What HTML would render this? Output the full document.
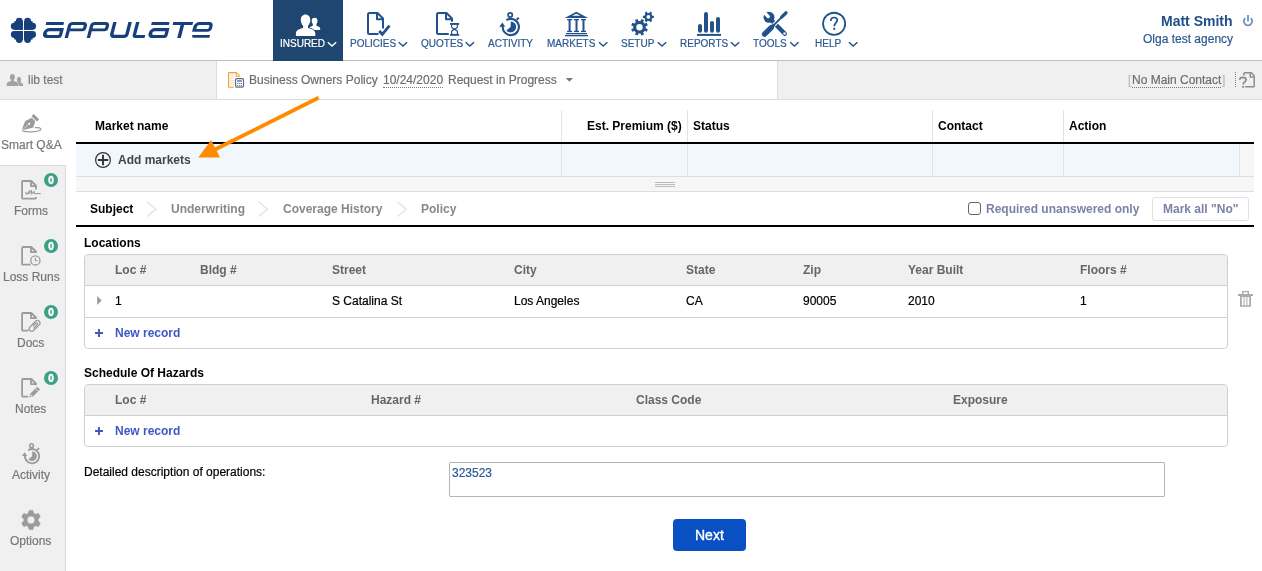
<!DOCTYPE html>
<html><head><meta charset="utf-8">
<style>
*{box-sizing:border-box;margin:0;padding:0}
body{-webkit-font-smoothing:antialiased}
html,body{width:1262px;height:571px;overflow:hidden;background:#fff;font-family:"Liberation Sans",sans-serif;position:relative}
.a{position:absolute}
.t{position:absolute;white-space:nowrap;font-size:12px;line-height:12px;-webkit-text-stroke:0.2px currentColor}
.b{font-weight:bold;-webkit-text-stroke:0}
.n{font-size:10px;line-height:10px;color:#2c5890;top:39px}
.nw{color:#fff}
.sb{font-size:12px;line-height:12px;color:#777}
.hd{font-weight:bold;color:#666;-webkit-text-stroke:0}
.badge{position:absolute;left:44px;width:14px;height:14px;border-radius:7px;background:#3d9f85;color:#fff;font:bold 10px/15px "Liberation Sans",sans-serif;text-align:center;-webkit-text-stroke:0.45px #fff}
</style></head><body>
<!-- HEADER -->
<div class="a" style="left:0;top:60px;width:1262px;height:1px;background:#b7c2cd"></div>
<div class="a" style="left:273px;top:0;width:70px;height:61px;background:#1f4571"></div>
<!-- SECOND BAR -->
<div class="a" style="left:0;top:61px;width:1262px;height:38px;background:#f0f0f0"></div>
<div class="a" style="left:0;top:99px;width:1262px;height:1px;background:#dcdcdc"></div>
<div class="a" style="left:216px;top:61px;width:562px;height:38px;background:#fff;border-left:1px solid #dcdcdc;border-right:1px solid #dcdcdc"></div>
<!-- SIDEBAR -->
<div class="a" style="left:0;top:165px;width:66px;height:406px;background:#f0f0f0;border-right:1px solid #dcdcdc;border-top:1px solid #dcdcdc"></div>
<!-- CONTENT BODY -->
<div id="content">
<!-- market table -->
<div class="a" style="left:561px;top:110px;width:1px;height:32px;background:#e3e3e3"></div>
<div class="a" style="left:687px;top:110px;width:1px;height:32px;background:#e3e3e3"></div>
<div class="a" style="left:932px;top:110px;width:1px;height:32px;background:#e3e3e3"></div>
<div class="a" style="left:1063px;top:110px;width:1px;height:32px;background:#e3e3e3"></div>
<div class="a" style="left:76px;top:142px;width:1178px;height:2px;background:#000"></div>
<div class="a" style="left:76px;top:144px;width:1164px;height:32px;background:#f2f7fd"></div>
<div class="a" style="left:1240px;top:144px;width:14px;height:32px;background:#f6f6f6"></div>
<div class="a" style="left:561px;top:144px;width:1px;height:32px;background:#e3e3e3"></div>
<div class="a" style="left:687px;top:144px;width:1px;height:32px;background:#e3e3e3"></div>
<div class="a" style="left:932px;top:144px;width:1px;height:32px;background:#e3e3e3"></div>
<div class="a" style="left:1063px;top:144px;width:1px;height:32px;background:#e3e3e3"></div>
<div class="a" style="left:1239px;top:144px;width:1px;height:32px;background:#e3e3e3"></div>
<!-- splitter -->
<div class="a" style="left:76px;top:176px;width:1178px;height:16px;background:#f6f6f6;border-top:1px solid #dedede;border-bottom:1px solid #dedede"></div>
<div class="a" style="left:655px;top:182px;width:20px;height:1px;background:#bbb"></div>
<div class="a" style="left:655px;top:184px;width:20px;height:1px;background:#bbb"></div>
<div class="a" style="left:655px;top:186px;width:20px;height:1px;background:#bbb"></div>
<!-- tabs line -->
<div class="a" style="left:76px;top:225px;width:1178px;height:2px;background:#000"></div>
<!-- checkbox & button -->
<div class="a" style="left:968px;top:202px;width:13px;height:13px;border:1px solid #666;border-radius:3px;background:#fff"></div>
<div class="a" style="left:1152px;top:197px;width:97px;height:24px;border:1px solid #dfe1e6;border-radius:3px;background:#fff"></div>
<!-- locations table -->
<div class="a" style="left:84px;top:254px;width:1144px;height:95px;border:1px solid #cfcfcf;border-radius:4px;overflow:hidden;background:#fff">
  <div class="a" style="left:0;top:0;width:1142px;height:31px;background:#f0f0f0;border-bottom:1px solid #cfcfcf"></div>
  <div class="a" style="left:0;top:62px;width:1142px;height:1px;background:#cfcfcf"></div>
</div>
<!-- hazards table -->
<div class="a" style="left:84px;top:384px;width:1144px;height:63px;border:1px solid #cfcfcf;border-radius:4px;overflow:hidden;background:#fff">
  <div class="a" style="left:0;top:0;width:1142px;height:31px;background:#f0f0f0;border-bottom:1px solid #cfcfcf"></div>
</div>
<!-- textarea -->
<div class="a" style="left:449px;top:462px;width:716px;height:35px;border:1px solid #b5b5b5;border-radius:1px;background:#fff"></div>
<!-- next button -->
<div class="a" style="left:673px;top:519px;width:73px;height:32px;border-radius:4px;background:#0950c4"></div>
</div>
<!-- TEXTS -->
<div id="texts" style="position:absolute;left:0;top:0;width:1262px;height:571px;will-change:transform">
<!-- nav -->
<span class="t n nw" style="left:280px">INSURED</span>
<span class="t n" style="left:350px">POLICIES</span>
<span class="t n" style="left:421px">QUOTES</span>
<span class="t n" style="left:488px">ACTIVITY</span>
<span class="t n" style="left:547px">MARKETS</span>
<span class="t n" style="left:621px">SETUP</span>
<span class="t n" style="left:680px">REPORTS</span>
<span class="t n" style="left:753px">TOOLS</span>
<span class="t n" style="left:815px">HELP</span>
<span class="t b" style="left:1161px;top:14px;font-size:14px;line-height:14px;color:#1e4f87">Matt Smith</span>
<span class="t" style="left:1143px;top:33px;color:#2b5a8f">Olga test agency</span>
<!-- second bar -->
<span class="t" style="left:28px;top:74px;color:#777">lib test</span>
<span class="t" style="left:249px;top:74px;color:#6e6e6e">Business Owners Policy</span>
<span class="t" style="left:383px;top:74px;color:#6e6e6e;border-bottom:1px dotted #777;line-height:13px">10/24/2020</span>
<span class="t" style="left:448px;top:74px;color:#6e6e6e">Request in Progress</span>
<span class="t" style="left:1128px;top:74px;color:#bbb">[</span>
<span class="t" style="left:1132px;top:74px;color:#6e6e6e;border-bottom:1px dotted #777;line-height:13px">No Main Contact</span>
<span class="t" style="left:1222px;top:74px;color:#bbb">]</span>
<!-- sidebar -->
<span class="t sb" style="left:1px;top:139px">Smart Q&amp;A</span>
<span class="t sb" style="left:14px;top:205px">Forms</span>
<span class="t sb" style="left:3px;top:271px">Loss Runs</span>
<span class="t sb" style="left:17px;top:337px">Docs</span>
<span class="t sb" style="left:15px;top:403px">Notes</span>
<span class="t sb" style="left:12px;top:469px">Activity</span>
<span class="t sb" style="left:10px;top:535px">Options</span>
<span class="badge" style="top:173px">0</span>
<span class="badge" style="top:239px">0</span>
<span class="badge" style="top:305px">0</span>
<span class="badge" style="top:371px">0</span>
<!-- market table -->
<span class="t b" style="left:95px;top:120px;color:#000">Market name</span>
<span class="t b" style="left:587px;top:120px;color:#000">Est. Premium ($)</span>
<span class="t b" style="left:693px;top:120px;color:#000">Status</span>
<span class="t b" style="left:938px;top:120px;color:#000">Contact</span>
<span class="t b" style="left:1069px;top:120px;color:#000">Action</span>
<span class="t b" style="left:118px;top:154px;color:#444">Add markets</span>
<!-- tabs -->
<span class="t b" style="left:90px;top:203px;color:#000">Subject</span>
<span class="t b" style="left:171px;top:203px;color:#888">Underwriting</span>
<span class="t b" style="left:283px;top:203px;color:#888">Coverage History</span>
<span class="t b" style="left:421px;top:203px;color:#888">Policy</span>
<span class="t b" style="left:986px;top:203px;color:#7b82a6">Required unanswered only</span>
<span class="t b" style="left:1163px;top:203px;color:#7b82a6">Mark all "No"</span>
<!-- locations -->
<span class="t b" style="left:84px;top:237px;color:#000">Locations</span>
<span class="t hd" style="left:115px;top:264px">Loc #</span>
<span class="t hd" style="left:200px;top:264px">Bldg #</span>
<span class="t hd" style="left:332px;top:264px">Street</span>
<span class="t hd" style="left:514px;top:264px">City</span>
<span class="t hd" style="left:686px;top:264px">State</span>
<span class="t hd" style="left:803px;top:264px">Zip</span>
<span class="t hd" style="left:908px;top:264px">Year Built</span>
<span class="t hd" style="left:1080px;top:264px">Floors #</span>
<span class="t" style="left:115px;top:295px;color:#000">1</span>
<span class="t" style="left:332px;top:295px;color:#000">S Catalina St</span>
<span class="t" style="left:514px;top:295px;color:#000">Los Angeles</span>
<span class="t" style="left:686px;top:295px;color:#000">CA</span>
<span class="t" style="left:803px;top:295px;color:#000">90005</span>
<span class="t" style="left:908px;top:295px;color:#000">2010</span>
<span class="t" style="left:1080px;top:295px;color:#000">1</span>
<span class="t b" style="left:115px;top:327px;color:#3e58c4">New record</span>
<!-- hazards -->
<span class="t b" style="left:84px;top:367px;color:#000">Schedule Of Hazards</span>
<span class="t hd" style="left:115px;top:394px">Loc #</span>
<span class="t hd" style="left:371px;top:394px">Hazard #</span>
<span class="t hd" style="left:636px;top:394px">Class Code</span>
<span class="t hd" style="left:953px;top:394px">Exposure</span>
<span class="t b" style="left:115px;top:425px;color:#3e58c4">New record</span>
<!-- description -->
<span class="t" style="left:84px;top:466px;color:#000">Detailed description of operations:</span>
<span class="t" style="left:452px;top:467px;color:#2a5a92">323523</span>
<span class="t" style="left:695px;top:528px;font-size:14px;line-height:14px;color:#fff;-webkit-text-stroke:0.35px #fff">Next</span>
</div>
<!-- ICONS -->
<svg class="a" style="left:0;top:0" width="1262" height="571" viewBox="0 0 1262 571" id="icons">
<g id="logo"><g fill="#173f7b" transform="translate(23.45,30.35)"><g><rect x="-7.60" y="-9.15" width="6.90" height="8.45"/><rect x="-9.15" y="-7.60" width="8.45" height="6.90"/><rect x="-9.15" y="-9.15" width="8.45" height="8.45"/><circle cx="-4.15" cy="-9.15" r="3.45"/><circle cx="-9.15" cy="-4.15" r="3.45"/></g><g transform="scale(-1,1)"><rect x="-7.60" y="-9.15" width="6.90" height="8.45"/><rect x="-9.15" y="-7.60" width="8.45" height="6.90"/><rect x="-9.15" y="-9.15" width="8.45" height="8.45"/><circle cx="-4.15" cy="-9.15" r="3.45"/><circle cx="-9.15" cy="-4.15" r="3.45"/></g><g transform="scale(1,-1)"><rect x="-7.60" y="-9.15" width="6.90" height="8.45"/><rect x="-9.15" y="-7.60" width="8.45" height="6.90"/><rect x="-9.15" y="-9.15" width="8.45" height="8.45"/><circle cx="-4.15" cy="-9.15" r="3.45"/><circle cx="-9.15" cy="-4.15" r="3.45"/></g><g transform="scale(-1,-1)"><rect x="-7.60" y="-9.15" width="6.90" height="8.45"/><rect x="-9.15" y="-7.60" width="8.45" height="6.90"/><rect x="-9.15" y="-9.15" width="8.45" height="8.45"/><circle cx="-4.15" cy="-9.15" r="3.45"/><circle cx="-9.15" cy="-4.15" r="3.45"/></g></g><g transform="matrix(1,0,-0.26,1,9.880,0)"><path d="M42.20,22.00 H58.70 A1.4,1.4 0 0 1 60.10,23.40 V24.30 A0.6,0.6 0 0 1 59.50,24.90 H42.20 V22.00 Z M46.90,28.00 H60.90 A0.5,0.5 0 0 1 61.40,28.50 V35.40 A2.6,2.6 0 0 1 58.80,38.00 H46.40 A4.5,4.5 0 0 1 41.90,33.50 V33.00 A5,5 0 0 1 46.90,28.00 Z M47.30,31.30 A1.8,1.8 0 0 0 45.50,33.10 V33.20 A1.8,1.8 0 0 0 47.30,35.00 H57.30 A0.8,0.8 0 0 0 58.10,34.20 V31.60 A0.3,0.3 0 0 0 57.80,31.30 Z M68.80,22.00 H79.80 A4,4 0 0 1 83.80,26.00 V27.70 A3.5,3.5 0 0 1 80.30,31.20 H64.60 V26.20 A4.2,4.2 0 0 1 68.80,22.00 Z M69.20,24.90 A1.2,1.2 0 0 0 68.00,26.10 V28.60 H79.50 A1,1 0 0 0 80.50,27.60 V25.90 A1,1 0 0 0 79.50,24.90 Z M64.60,29.00 H67.95 V38.00 H64.60 V29.00 Z M90.90,22.00 H101.90 A4,4 0 0 1 105.90,26.00 V27.70 A3.5,3.5 0 0 1 102.40,31.20 H86.70 V26.20 A4.2,4.2 0 0 1 90.90,22.00 Z M91.30,24.90 A1.2,1.2 0 0 0 90.10,26.10 V28.60 H101.60 A1,1 0 0 0 102.60,27.60 V25.90 A1,1 0 0 0 101.60,24.90 Z M86.70,29.00 H90.05 V38.00 H86.70 V29.00 Z M109.10,22 H112.50 V33.8 A1,1 0 0 0 113.50,34.8 H123.25 A1,1 0 0 0 124.25,33.8 V22 H127.70 V34.2 A3.8,3.8 0 0 1 123.90,38 H113.30 A4.2,4.2 0 0 1 109.10,33.8 Z M131.90,22.00 H135.30 V38.00 H135.40 A3.5,3.5 0 0 1 131.90,34.50 V22.00 Z M133.90,34.90 H144.50 V38.00 H133.90 V34.90 Z M147.70,22.00 H164.20 A1.4,1.4 0 0 1 165.60,23.40 V24.30 A0.6,0.6 0 0 1 165.00,24.90 H147.70 V22.00 Z M152.40,28.00 H166.40 A0.5,0.5 0 0 1 166.90,28.50 V35.40 A2.6,2.6 0 0 1 164.30,38.00 H151.90 A4.5,4.5 0 0 1 147.40,33.50 V33.00 A5,5 0 0 1 152.40,28.00 Z M152.80,31.30 A1.8,1.8 0 0 0 151.00,33.10 V33.20 A1.8,1.8 0 0 0 152.80,35.00 H162.80 A0.8,0.8 0 0 0 163.60,34.20 V31.60 A0.3,0.3 0 0 0 163.30,31.30 Z M169.20,22.00 H189.00 V24.90 H169.20 V22.00 Z M177.20,24.00 H180.80 V38.00 H177.20 V24.00 Z M195.40,22.00 H205.50 A4,4 0 0 1 209.50,26.00 V27.90 A3.8,3.8 0 0 1 205.70,31.70 H190.80 A0.4,0.4 0 0 1 190.40,31.30 V27.00 A5,5 0 0 1 195.40,22.00 Z M195.80,24.90 A1.8,1.8 0 0 0 194.00,26.70 V28.60 A0.3,0.3 0 0 0 194.30,28.90 H205.00 A1.3,1.3 0 0 0 206.30,27.60 V26.20 A1.3,1.3 0 0 0 205.00,24.90 Z M191.60,35.00 H209.30 V37.80 H193.80 A2.2,2.2 0 0 1 191.60,35.60 V35.00 Z " fill="#173f7b" fill-rule="nonzero"/></g></g><!--/logo-->
<g id="nav">
<g fill="#fff">
<ellipse cx="314.6" cy="21.1" rx="2.9" ry="3.3"/>
<path d="M312.8,23.5 h3.6 v2.2 c1.8,0.4 3.8,1.3 3.8,3 v1.3 h-10.8 v-1.3 c0,-1.7 1.8,-2.6 3.4,-3 z"/>
</g>
<g fill="#fff" stroke="#1f4571" stroke-width="1.3" paint-order="stroke">
<path d="M305.5,14.6 c2.9,0 4.8,2.3 4.8,5.4 c0,2.4 -1,4.6 -2.3,5.8 v2.2 c3.6,0.9 7.3,2.3 7.3,5.2 v2.9 h-19.4 v-2.9 c0,-2.9 3.7,-4.3 7.2,-5.2 v-2.2 c-1.3,-1.2 -2.3,-3.4 -2.3,-5.8 c0,-3.1 1.9,-5.4 4.7,-5.4 z"/>
</g>
<g fill="none" stroke="#21528c" stroke-width="2" stroke-linejoin="round">
<path d="M378.5,34 H369.5 Q368,34 368,32.5 V14.5 Q368,13 369.5,13 H377.5 L383,18.5 V28.5"/>
<path d="M377,13 V19.3 H383"/>
</g>
<path d="M379.2,31 L382.3,34.3 L389.5,25.6" fill="none" stroke="#21528c" stroke-width="2.8"/>
<g fill="none" stroke="#21528c" stroke-width="2" stroke-linejoin="round">
<path d="M448.8,34 H438.5 Q437,34 437,32.5 V14.5 Q437,13 438.5,13 H446.5 L452,18.5 V21.7"/>
<path d="M446,13 V19.3 H452"/>
</g>
<g fill="#21528c">
<rect x="450" y="23" width="9.2" height="1.9"/>
<rect x="450" y="33.9" width="9.2" height="1.9"/>
</g>
<path d="M451.6,24.8 V27 C451.6,28.6 457.4,29.8 457.4,31.6 V34 M457.4,24.8 V27 C457.4,28.6 451.6,29.8 451.6,31.6 V34" fill="none" stroke="#21528c" stroke-width="1.2"/>
<g fill="none" stroke="#21528c" stroke-width="2.1">
<path d="M506.39,20.21 A8.1,8.1 0 1 1 502.78,25.87"/>
<circle cx="510.2" cy="15" r="2.1" stroke-width="1.8"/>
<path d="M516.6,19.8 L518.8,17.8" stroke-width="2"/>
</g>
<path d="M499.2,26.8 L502.4,22.4 L505.2,26.8 Z" fill="#21528c"/>

<path d="M510.6,26.9 L510.79,21.40 A5.5,5.5 0 1 1 506.39,30.44 Z" fill="#21528c"/>
<g fill="#21528c">
<path d="M576.3,11.8 L588.2,17.9 H564.6 Z M576.3,13.7 L572,15.7 H580.6 Z" fill-rule="evenodd"/>
<rect x="567.1" y="19" width="5" height="1.3"/><rect x="574" y="19" width="5" height="1.3"/><rect x="581" y="19" width="5" height="1.3"/>
<rect x="568.6" y="19.5" width="2" height="12"/><rect x="575.5" y="19.5" width="2" height="12"/><rect x="582.5" y="19.5" width="2" height="12"/>
<rect x="567.1" y="30.8" width="5" height="1.3"/><rect x="574" y="30.8" width="5" height="1.3"/><rect x="581" y="30.8" width="5" height="1.3"/>
<rect x="566" y="33" width="21" height="1.3"/>
<rect x="565" y="35" width="23" height="1.3"/>
</g>
<path d="M645.80,27.3 A6.3,6.3 0 1 1 633.20,27.3 A6.3,6.3 0 1 1 645.80,27.3 Z M642.70,27.3 A3.2,3.2 0 1 0 636.30,27.3 A3.2,3.2 0 1 0 642.70,27.3 Z" fill="#21528c" fill-rule="evenodd"/><path d="M643.86,30.62 L646.72,31.81 L647.80,29.22 L644.93,28.03Z M640.23,32.73 L641.42,35.60 L644.01,34.52 L642.82,31.66Z M636.18,31.66 L634.99,34.52 L637.58,35.60 L638.77,32.73Z M634.07,28.03 L631.20,29.22 L632.28,31.81 L635.14,30.62Z M635.14,23.98 L632.28,22.79 L631.20,25.38 L634.07,26.57Z M638.77,21.87 L637.58,19.00 L634.99,20.08 L636.18,22.94Z M642.82,22.94 L644.01,20.08 L641.42,19.00 L640.23,21.87Z M644.93,26.57 L647.80,25.38 L646.72,22.79 L643.86,23.98Z" fill="#21528c"/>
<path d="M652.40,16.9 A4.0,4.0 0 1 1 644.40,16.9 A4.0,4.0 0 1 1 652.40,16.9 Z M650.30,16.9 A1.9,1.9 0 1 0 646.50,16.9 A1.9,1.9 0 1 0 650.30,16.9 Z" fill="#21528c" fill-rule="evenodd"/><path d="M651.40,18.00 L653.90,18.00 L653.90,15.80 L651.40,15.80Z M648.95,20.05 L650.20,22.21 L652.10,21.11 L650.85,18.95Z M645.95,18.95 L644.70,21.11 L646.60,22.21 L647.85,20.05Z M645.40,15.80 L642.90,15.80 L642.90,18.00 L645.40,18.00Z M647.85,13.75 L646.60,11.59 L644.70,12.69 L645.95,14.85Z M650.85,14.85 L652.10,12.69 L650.20,11.59 L648.95,13.75Z" fill="#21528c"/>
<g stroke="#21528c" stroke-width="4" stroke-linecap="round">
<path d="M700,26 V30.7 M706,13.9 V30.7 M712,23 V30.7 M718,19 V30.7"/>
</g>
<rect x="697" y="33.9" width="24" height="2" fill="#21528c"/>
<g>
<path d="M771,19.8 L784.8,33.8" stroke="#21528c" stroke-width="4.4" stroke-linecap="round"/>
<circle cx="769" cy="17.3" r="5.5" fill="#21528c"/>
<path d="M768.2,16.5 L761.5,9.8" stroke="#fff" stroke-width="3.3" stroke-linecap="round"/>
<circle cx="784.5" cy="33.5" r="1.25" fill="#fff"/>
<path d="M770.5,28.3 L774,24.8 L782,16.8" stroke="#fff" stroke-width="4" fill="none"/>
<path d="M764.6,34.2 L771.2,27.6" stroke="#21528c" stroke-width="5.4" stroke-linecap="round"/>
<path d="M770.5,28.3 L774.2,24.6" stroke="#21528c" stroke-width="3"/>
<path d="M773.5,25.3 L782,16.8" stroke="#21528c" stroke-width="1.9"/>
<path d="M781.6,17.2 L786,12.8" stroke="#21528c" stroke-width="3.3" stroke-linecap="round"/>
</g>
<circle cx="834.1" cy="23.8" r="11.05" fill="none" stroke="#21528c" stroke-width="1.8"/>
<path d="M830.8,21 C830.8,18.6 832.3,17.5 834.1,17.5 C836,17.5 837.3,18.7 837.3,20.3 C837.3,22.6 834.2,23.3 834.2,26.2" fill="none" stroke="#1f1f1f" stroke-width="1.7" style="stroke:#21528c"/>
<rect x="833.2" y="27.8" width="2" height="2" fill="#21528c"/>
<path d="M327.8,42.3 L332.0,46.1 L336.2,42.3" fill="none" stroke="#fff" stroke-width="1.45"/>
<path d="M398.7,42.3 L402.9,46.1 L407.1,42.3" fill="none" stroke="#21528c" stroke-width="1.45"/>
<path d="M465.6,42.3 L469.8,46.1 L474.0,42.3" fill="none" stroke="#21528c" stroke-width="1.45"/>
<path d="M599.0,42.3 L603.2,46.1 L607.4,42.3" fill="none" stroke="#21528c" stroke-width="1.45"/>
<path d="M657.8,42.3 L662.0,46.1 L666.2,42.3" fill="none" stroke="#21528c" stroke-width="1.45"/>
<path d="M730.8,42.3 L735.0,46.1 L739.2,42.3" fill="none" stroke="#21528c" stroke-width="1.45"/>
<path d="M790.2,42.3 L794.4,46.1 L798.6,42.3" fill="none" stroke="#21528c" stroke-width="1.45"/>
<path d="M849.0,42.3 L853.2,46.1 L857.4,42.3" fill="none" stroke="#21528c" stroke-width="1.45"/>
<g stroke="#6f93ba" stroke-width="1.8" fill="none">
<path d="M1248,15 V21.6"/>
<path d="M1245.2,18.2 A4.1,4.1 0 1 0 1250.8,18.2"/>
</g>
</g>
<g id="misc">
<g fill="#a3a3a3">
<ellipse cx="19" cy="79.4" rx="2.1" ry="2.6"/>
<path d="M17.3,81.2 h3.4 v1.6 c1.4,0.4 2.4,1 2.4,2 v1.2 h-7 v-1.2 c0,-1 0.7,-1.6 1.2,-2 z"/>
</g>
<g fill="#a3a3a3" stroke="#f0f0f0" stroke-width="1" paint-order="stroke">
<path d="M12.3,74 c1.6,0 2.6,1.3 2.6,3 c0,1.3 -0.5,2.4 -1.2,3.1 v1 c2.1,0.5 4.4,1.3 4.4,3.2 v1.7 h-11.4 v-1.7 c0,-1.9 2.3,-2.7 4.4,-3.2 v-1 c-0.7,-0.7 -1.2,-1.8 -1.2,-3.1 c0,-1.7 1,-3 2.4,-3 z"/>
</g>
<g>
<path d="M234,87.2 H229.2 Q228.6,87.2 228.6,86.6 V73.2 Q228.6,72.6 229.2,72.6 H236.2 L239.6,76 V76.4" fill="#fff" stroke="#f0a02e" stroke-width="1.15" stroke-linejoin="round"/>
<path d="M236.2,72.8 V76.2 H239.4" fill="#fff" stroke="#f0a02e" stroke-width="1.1"/>
<g stroke="#f7d3a0" stroke-width="0.8"><path d="M230.2,74.6 H233.8 M230.2,76.6 H233.8 M230.2,78.6 H233.8 M230.2,80.6 H233.8 M230.2,82.6 H233.8 M230.2,84.6 H233.8"/></g>
<rect x="235.5" y="78.7" width="8" height="8.4" rx="1.3" fill="#fff" stroke="#5f6d82" stroke-width="1.2"/>
<rect x="237" y="80.2" width="4.9" height="1.5" fill="#4a78d0"/>
<g fill="#6a7588"><rect x="236.9" y="83.1" width="1.3" height="0.9"/><rect x="238.8" y="83.1" width="1.3" height="0.9"/><rect x="236.9" y="85" width="1.3" height="0.9"/><rect x="238.8" y="85" width="1.3" height="0.9"/><rect x="240.7" y="85" width="1.3" height="0.9"/></g>
<rect x="240.7" y="83" width="1.3" height="1.1" fill="#e03a2a"/>
</g>
<path d="M565.8,78 L573,78 L569.4,81.8 Z" fill="#777"/>
<path d="M1235.5,72 V87.5" stroke="#5a86c0" stroke-width="1" stroke-dasharray="1,1"/>
<g fill="none" stroke="#8e8e8e" stroke-width="1.5">
<path d="M1243.9,75.6 V73.7 Q1243.9,72.8 1244.8,72.8 H1251.3 L1254.2,75.7 V86 Q1254.2,86.8 1253.4,86.8 H1245.2"/>
<path d="M1250.3,72.8 V76.9 H1254.2"/>
<path d="M1239.7,79.8 C1239.7,78 1241,77.3 1242.9,77.3 C1244.9,77.3 1246.1,78.3 1246.1,79.8 C1246.1,81.7 1243.1,81.9 1243.1,84.6" stroke-width="1.8"/>
</g>
<rect x="1242.1" y="85.9" width="1.9" height="1.9" fill="#8e8e8e"/>
<g fill="#9b9b9b">
<path d="M31.8,117.7 L35.2,121.3 L33.3,127.4 L21.5,130.6 L25.2,120.9 Z"/>
<rect x="31.5" y="116.2" width="7.6" height="3.2" transform="rotate(45 35.3 117.8)"/>
</g>
<circle cx="29.2" cy="123.8" r="1.1" fill="#fff"/>
<path d="M21.8,130.4 L28.4,124.5" stroke="#fff" stroke-width="0.6"/>
<path d="M34.8,127.6 C39,127.3 41.2,128 40.8,129.4 C40.2,131.6 30,132.6 22.5,131.2" fill="none" stroke="#9b9b9b" stroke-width="1.2"/>
<path d="M35.9,189.5 V185.5 L31.3,181.0 H23.1 Q22.1,181.0 22.1,182.0 V197.7 Q22.1,198.7 23.1,198.7 H34.9 Q35.9,198.7 35.9,197.7 V197.0 M31,181.0 V186.2 H35.9" fill="none" stroke="#9b9b9b" stroke-width="1.8" stroke-linejoin="round"/>
<rect x="33" y="190.5" width="6" height="5" fill="#f0f0f0"/>
<path d="M25.3,192.4 L26.8,194.2 L30,190.4 M28.5,194 L31.5,190.8 L31.6,193.8 L34,191.6 L34.4,193.9 C35.5,193.2 37,193.6 40.7,193.6" fill="none" stroke="#9b9b9b" stroke-width="1.1"/>
<path d="M35.9,253.0 V251.5 L31.3,247.0 H23.1 Q22.1,247.0 22.1,248.0 V263.7 Q22.1,264.7 23.1,264.7 H30.6 M31,247.0 V252.2 H35.9" fill="none" stroke="#9b9b9b" stroke-width="1.8" stroke-linejoin="round"/>
<circle cx="35.4" cy="260.4" r="4.6" fill="#f0f0f0" stroke="#9b9b9b" stroke-width="1.3"/>
<path d="M35.3,257.8 V260.8 H37.8" fill="none" stroke="#9b9b9b" stroke-width="1.1"/>
<path d="M35.9,318.8 V317.5 L31.3,313.0 H23.1 Q22.1,313.0 22.1,314.0 V329.7 Q22.1,330.7 23.1,330.7 H28.5 M31,313.0 V318.2 H35.9" fill="none" stroke="#9b9b9b" stroke-width="1.8" stroke-linejoin="round"/>
<g transform="translate(34.6,325.9) rotate(-45)" fill="none" stroke="#9b9b9b" stroke-width="1.3"><path d="M-4,-2.55 H4 A2.55,2.55 0 0 1 4,2.55 H-4 A2.55,2.55 0 0 1 -4,-2.55 Z"/><path d="M-2.6,1.05 H2.6 A1.05,1.05 0 0 0 2.6,-1.05 H-1.2"/></g>
<path d="M35.9,385.2 V383.5 L31.3,379.0 H23.1 Q22.1,379.0 22.1,380.0 V395.7 Q22.1,396.7 23.1,396.7 H28.5 M31,379.0 V384.2 H35.9" fill="none" stroke="#9b9b9b" stroke-width="1.8" stroke-linejoin="round"/>
<g transform="translate(29.5,397.3) rotate(-45)"><path d="M0,0 L3.3,-1.95 H12.9 V1.95 H3.3 Z" fill="#9b9b9b"/><path d="M1.3,0 L3,-0.95 V0.95 Z" fill="#f0f0f0"/><path d="M10.4,-2.2 V2.2" stroke="#f0f0f0" stroke-width="0.8"/></g>
<g fill="none" stroke="#9b9b9b" stroke-width="1.85">
<path d="M28.22,450.22 A7.13,7.13 0 1 1 25.04,455.21"/>
<circle cx="31.57" cy="445.64" r="1.85" stroke-width="1.58"/>
<path d="M37.20,449.86 L39.14,448.10" stroke-width="1.76"/>
</g>
<path d="M21.89,456.02 L24.71,452.15 L27.17,456.02 Z" fill="#9b9b9b"/>
<path d="M32.10,456.20 L32.27,451.36 A4.84,4.84 0 1 1 28.39,459.31 Z" fill="#9b9b9b"/>
<path d="M34.45,514.02 L33.69,513.00 L32.87,510.38 L29.13,510.38 L28.31,513.00 L27.55,514.02 L26.28,514.17 L23.60,513.57 L21.73,516.81 L23.59,518.83 L24.10,520.00 L23.59,521.17 L21.73,523.19 L23.60,526.43 L26.28,525.83 L27.55,525.98 L28.31,527.00 L29.13,529.62 L32.87,529.62 L33.69,527.00 L34.45,525.98 L35.72,525.83 L38.40,526.43 L40.27,523.19 L38.41,521.17 L37.90,520.00 L38.41,518.83 L40.27,516.81 L38.40,513.57 L35.72,514.17Z M34.9,520 A3.9,3.9 0 1 0 27.1,520 A3.9,3.9 0 1 0 34.9,520 Z" fill="#9b9b9b" fill-rule="evenodd" stroke="#9b9b9b" stroke-width="0.6" stroke-linejoin="round"/>
<circle cx="103" cy="160" r="7.4" fill="none" stroke="#333" stroke-width="1.2"/><path d="M97.8,160 H108.2 M103,154.8 V165.2" stroke="#333" stroke-width="1.9"/>
<path d="M147.0,201.8 L156.0,209.2 L147.0,216.6" fill="none" stroke="#e2e2e2" stroke-width="1.3"/>
<path d="M258.6,201.8 L267.6,209.2 L258.6,216.6" fill="none" stroke="#e2e2e2" stroke-width="1.3"/>
<path d="M397.3,201.8 L406.3,209.2 L397.3,216.6" fill="none" stroke="#e2e2e2" stroke-width="1.3"/>
<path d="M95,333 H103 M99,329 V337 M95,431 H103 M99,427 V435" stroke="#4058c6" stroke-width="1.9"/>
<path d="M97.2,296 L101.6,300.5 L97.2,305 Z" fill="#999"/>
<g fill="#ababab">
<rect x="1238" y="294" width="15" height="2"/>
<path d="M1242,291 H1249 V294 H1247.6 V292.3 H1243.4 V294 H1242 Z"/>
<path d="M1240,296 H1251 V306.8 H1240 Z M1241.8,297 V305.2 H1243.6 V297 Z M1244.6,297 V305.2 H1246.4 V297 Z M1247.4,297 V305.2 H1249.2 V297 Z" fill-rule="evenodd"/>
</g>
<g fill="#ff8c00"><path d="M318.6,97.8 L214,150" stroke="#ff8c00" stroke-width="3.8"/><path d="M211.2,140 L198.2,157.6 L220,157.6 Z"/></g>
</g><!--/misc-->
</svg>
</body></html>
